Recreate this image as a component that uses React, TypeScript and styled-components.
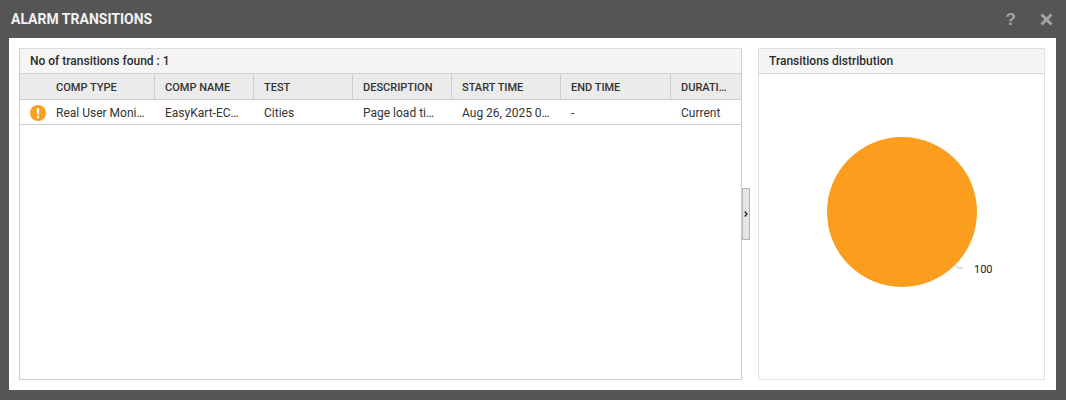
import styled, { createGlobalStyle } from 'styled-components';

const GlobalStyle = createGlobalStyle`
  html, body {
    margin: 0;
    padding: 0;
    background: #555555;
  }

  body {
    font-family: Roboto, "Liberation Sans", sans-serif;
  }
`;

const Dialog = styled.div`
  width: 1066px;
  height: 400px;
  background: #555555;
  display: flex;
  flex-direction: column;
  padding: 0 10px 10px 9px;
  box-sizing: border-box;
`;

const TitleBar = styled.div`
  height: 38px;
  display: flex;
  align-items: center;
  justify-content: space-between;
  padding: 0 3px 0 2px;
`;

const Title = styled.h1`
  margin: 0;
  font-size: 14px;
  font-weight: 700;
  color: #f2f2f2;
`;

const TitleIcons = styled.div`
  display: flex;
  align-items: center;
  gap: 24px;
  margin-top: 1px;
`;

const HelpMark = styled.span`
  font-family: "Liberation Sans", sans-serif;
  font-size: 17px;
  font-weight: 700;
  line-height: 20px;
  color: #a3a3a3;
`;

const Body = styled.div`
  flex: 1;
  min-height: 0;
  background: #ffffff;
  padding: 10px 11px 10px 10px;
  display: grid;
  grid-template-columns: 723px 287px;
  justify-content: space-between;
  position: relative;
`;

const Panel = styled.section`
  border: 1px solid #cccccc;
  border-top-color: #dddddd;
  display: flex;
  flex-direction: column;
  min-width: 0;
`;

const ChartPanel = styled(Panel)`
  border-color: #e0e0e0;
`;

const PanelHeader = styled.div`
  height: 25px;
  box-sizing: border-box;
  flex: none;
  background: #f5f5f5;
  display: flex;
  align-items: center;
  padding-left: 10px;
  font-size: 12px;
  font-weight: 500;
  color: #2b2b2b;
  border-bottom: 1px solid #d4d4d4;
`;

const Table = styled.div`
  display: grid;
  grid-template-columns: 135px 99px 99px 99px 109px 110px 1fr;
  font-size: 12px;
  color: #333333;
`;

const HeadCell = styled.div<{ $first?: boolean }>`
  height: 26px;
  box-sizing: border-box;
  background: #ebebeb;
  border-bottom: 1px solid #cccccc;
  border-right: 1px solid #cccccc;
  display: flex;
  align-items: center;
  padding: 2px 0 0 ${(p) => (p.$first ? '36px' : '10px')};
  font-size: 11px;
  font-weight: 500;
  color: #333333;

  &:nth-child(7) {
    border-right: none;
  }
`;

const Cell = styled.div`
  height: 25px;
  box-sizing: border-box;
  border-bottom: 1px solid #cccccc;
  display: flex;
  align-items: center;
  gap: 10px;
  padding: 2px 0 0 10px;
  white-space: nowrap;
`;

const ChartArea = styled.div`
  flex: 1;
  min-height: 0;
`;

const ChartSvg = styled.svg`
  display: block;
  width: 285px;
  height: 305px;
`;

const ChartLabel = styled.text`
  font-family: Roboto, "Liberation Sans", sans-serif;
  font-size: 11px;
  fill: #222222;
`;

const CollapseHandle = styled.button`
  position: absolute;
  left: 733px;
  top: 150px;
  width: 8px;
  height: 52px;
  padding: 0;
  box-sizing: border-box;
  background: #e6e6e6;
  border: 1px solid #b5b5b5;
  display: flex;
  align-items: center;
  justify-content: center;
`;

const columns = ['COMP TYPE', 'COMP NAME', 'TEST', 'DESCRIPTION', 'START TIME', 'END TIME', 'DURATI…'];
const row = ['Real User Moni…', 'EasyKart-EC…', 'Cities', 'Page load ti…', 'Aug 26, 2025 0…', '-', 'Current'];

const WarningIcon = () => (
  <svg width="16" height="16" viewBox="0 0 16 16">
    <circle cx="8" cy="8" r="8" fill="#fb9d1d" />
    <rect x="6.8" y="3" width="2.4" height="6.6" rx="1" fill="#ffffff" />
    <circle cx="8" cy="12" r="1.4" fill="#ffffff" />
  </svg>
);

const App = () => {
  return (
    <>
      <GlobalStyle />
      <Dialog>
        <TitleBar>
          <Title>ALARM TRANSITIONS</Title>
          <TitleIcons>
            <HelpMark>?</HelpMark>
            <svg width="13" height="13" viewBox="0 0 13 13">
              <path d="M1.5 1.5 L11.5 11.5 M11.5 1.5 L1.5 11.5" stroke="#a3a3a3" strokeWidth="3" />
            </svg>
          </TitleIcons>
        </TitleBar>
        <Body>
          <Panel>
            <PanelHeader>No of transitions found : 1</PanelHeader>
            <Table>
              {columns.map((c, i) => (
                <HeadCell key={c} $first={i === 0}>
                  {c}
                </HeadCell>
              ))}
              {row.map((c, i) => (
                <Cell key={c}>
                  {i === 0 && <WarningIcon />}
                  {c}
                </Cell>
              ))}
            </Table>
          </Panel>
          <CollapseHandle aria-label="collapse">
            <svg width="4" height="6" viewBox="0 0 4 6">
              <path d="M0.7 0.5 L3 3 L0.7 5.5" fill="none" stroke="#222222" strokeWidth="1.3" />
            </svg>
          </CollapseHandle>
          <ChartPanel>
            <PanelHeader>Transitions distribution</PanelHeader>
            <ChartArea>
              <ChartSvg viewBox="0 0 285 305">
                <circle cx="143" cy="138" r="75" fill="#fb9d1d" />
                <path d="M196 190 L199 194 L204 194" fill="none" stroke="#c4c4c4" strokeWidth="1" />
                <ChartLabel x="215" y="199">100</ChartLabel>
              </ChartSvg>
            </ChartArea>
          </ChartPanel>
        </Body>
      </Dialog>
    </>
  );
};

export default App;
